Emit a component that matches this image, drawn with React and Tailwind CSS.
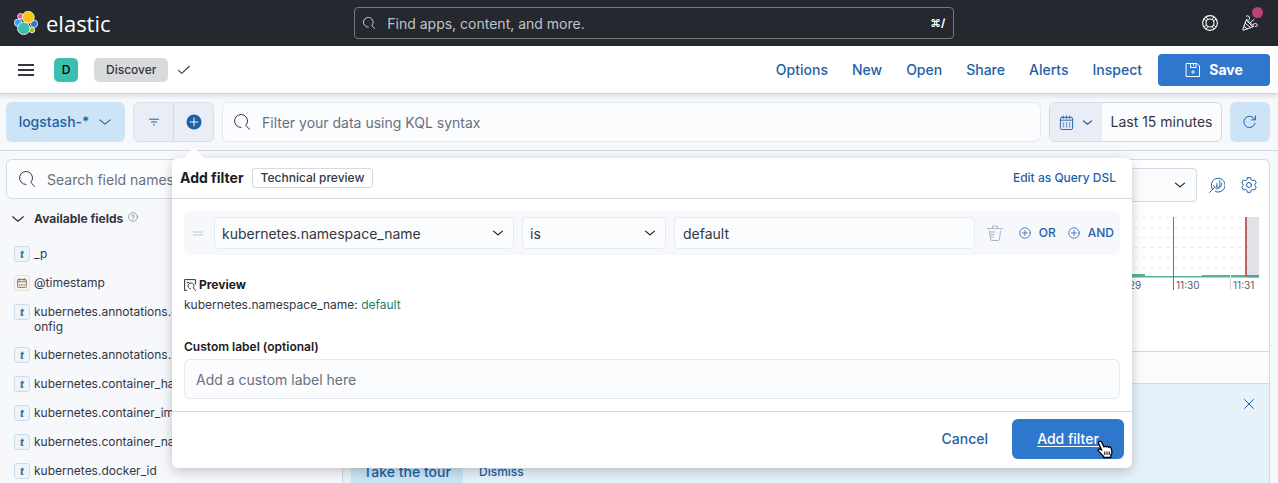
import React from 'react';

const fields = [
  { type: 'text', name: '_p' },
  { type: 'date', name: '@timestamp' },
  { type: 'text', name: 'kubernetes.annotations.c', rest: 'onfig' },
  { type: 'text', name: 'kubernetes.annotations.k' },
  { type: 'text', name: 'kubernetes.container_hash' },
  { type: 'text', name: 'kubernetes.container_image' },
  { type: 'text', name: 'kubernetes.container_name' },
  { type: 'text', name: 'kubernetes.docker_id' },
];

const navItems = ['Options', 'New', 'Open', 'Share', 'Alerts', 'Inspect'];

function Icon({ children, className = 'size-4', ...rest }) {
  return (
    <svg
      viewBox="0 0 16 16"
      fill="none"
      stroke="currentColor"
      strokeLinecap="round"
      strokeLinejoin="round"
      aria-hidden="true"
      className={`shrink-0 ${className}`}
      {...rest}
    >
      {children}
    </svg>
  );
}

const SearchIcon = ({ className }) => (
  <Icon className={className}>
    <path d="M7 13.5a6.5 6.5 0 1 1 4.8-2.1L15.5 15.4" />
  </Icon>
);

const ChevronDown = ({ className, strokeWidth = 1.2 }) => (
  <Icon className={className} strokeWidth={strokeWidth}>
    <path d="M2 5.5l6 5 6-5" />
  </Icon>
);

const CalendarIcon = ({ className }) => (
  <Icon className={className}>
    <rect x="1.5" y="2.5" width="13" height="13" rx="1.5" />
    <path d="M1.5 5.5h13M4.5 1v2.5M8 1v2.5M11.5 1v2.5" />
    <path d="M4 8.5h1.500M7.300 8.5h1.500M10.600 8.5h1.500M4 10.5h1.500M7.300 10.5h1.500M10.600 10.5h1.500M4 12.5h1.500M7.300 12.5h1.500M10.600 12.5h1.500" strokeLinecap="butt" />
  </Icon>
);

const PlusCircle = ({ className }) => (
  <Icon className={className}>
    <circle cx="8" cy="8" r="7" />
    <path d="M8 4.5v7M4.5 8h7" />
  </Icon>
);

function ElasticLogo() {
  return (
    <svg viewBox="0 0 24 24" className="size-6 shrink-0" aria-hidden="true" stroke="#fff" strokeWidth="0.8">
      <circle cx="6.6" cy="5.3" r="2.9" fill="#f04e98" />
      <circle cx="18" cy="19" r="2.8" fill="#93c90e" />
      <circle cx="4.2" cy="11.7" r="3.8" fill="#36a2ef" />
      <circle cx="20" cy="12.8" r="3.7" fill="#2f78cf" />
      <circle cx="14.2" cy="6.3" r="6" fill="#f9c416" />
      <circle cx="9.7" cy="17.4" r="6.2" fill="#3cbeb1" />
    </svg>
  );
}

function GlobalHeader() {
  return (
    <header className="flex h-[46px] shrink-0 items-center bg-[#25282f] text-white">
      <div className="flex flex-auto items-center gap-2 pr-2 pl-[14px]">
        <ElasticLogo />
        <span className="font-['Open_Sans',sans-serif] text-[22px] leading-6">elastic</span>
      </div>
      <label className="flex h-8 w-[600px] min-w-0 items-center gap-3 rounded border border-[#75787e] px-2">
        <SearchIcon className="size-3" />
        <span className="sr-only">Search Elastic</span>
        <input
          type="search"
          placeholder="Find apps, content, and more."
          className="h-full min-w-0 flex-1 bg-transparent text-sm outline-none placeholder:text-[#c0c3c8]"
        />
        <kbd className="font-['Inter',sans-serif] text-[11px] font-bold">⌘/</kbd>
      </label>
      <div className="flex flex-auto justify-end pr-2">
        <button aria-label="Help" className="flex size-10 items-center justify-center">
          <Icon>
            <circle cx="8" cy="8" r="7.400" strokeWidth="1.100" />
            <circle cx="8" cy="8" r="4" strokeWidth="1.100" />
            <path d="M4.200 2L6 4.600M2 4.200L4.600 6M11.800 2L10 4.600M14 4.200L11.400 6M4.200 14L6 11.400M2 11.800L4.600 10M11.800 14L10 11.400M14 11.800L11.400 10" strokeWidth="0.900" />
          </Icon>
        </button>
        <button aria-label="What's new" className="relative flex size-10 items-center justify-center">
          <Icon>
            <path d="M4.500 4.500L.8 14.400c-.2.600.3 1 .8.800L11.500 11.500z" />
            <path d="M3.200 8.200l5.200 4.400M4.500 5.500l6 6M2 11.500l3.200 2.400" />
            <path d="M4.500 1c2-.6 3.200.5 3 2.200-.1 1-.5 1.500-.5 1.500M8.500 7.500l3.500-3M11 9.500c1.500-1.500 4-1.300 4.200.3.200 1.500-1 2-1.700 1.700" />
          </Icon>
          <span className="absolute top-1 right-[7px] size-[11px] rounded-full bg-[#c0407b]" />
        </button>
      </div>
    </header>
  );
}

function AppBar() {
  return (
    <div className="relative z-10 flex h-12 shrink-0 items-center border-b border-[#d0d3d9] bg-white pr-2 pl-[18px] shadow-[0_2px_5px_rgba(0,0,0,0.12)]">
      <button aria-label="Menu" className="flex flex-col gap-[3px]">
        <span className="h-[2px] w-4 bg-[#343741]" />
        <span className="h-[2px] w-4 bg-[#343741]" />
        <span className="h-[2px] w-4 bg-[#343741]" />
      </button>
      <button aria-label="Default space" className="ml-5 flex size-6 items-center justify-center rounded-[5px] bg-[#3cbeb1] text-xs font-medium text-black">
        D
      </button>
      <a href="#discover" className="ml-4 flex h-6 items-center rounded-[5px] bg-[#d9dadc] px-3 text-xs font-medium text-[#343741]">
        Discover
      </a>
      <Icon className="ml-[10px] size-3 text-[#343741]" strokeWidth="1.4">
        <path d="M.8 8.500l4.200 4L15.200 3" />
      </Icon>
      <nav className="ml-auto flex items-center gap-6 text-sm font-medium text-[#1f5fa6]">
        {navItems.map((item) => (
          <a key={item} href={`#${item.toLowerCase()}`}>
            {item}
          </a>
        ))}
      </nav>
      <button className="ml-4 flex h-8 w-28 items-center justify-center gap-2 rounded bg-[#2f76cd] text-sm font-bold text-white">
        <Icon>
          <path d="M1.500 1.500h10.500l2.500 2.500v10.500h-13zM5.500 1.500v4h5.500v-4M8.500 2.500v1" strokeLinejoin="miter" />
          <circle cx="8" cy="10" r="1.700" fill="currentColor" fillOpacity="0.700" stroke="none" />
        </Icon>
        Save
      </button>
    </div>
  );
}

function QueryBar() {
  return (
    <div className="relative flex shrink-0 items-center gap-2 border-b border-[#d3dae6] py-2 pr-2 pl-[6px]">
      <button className="flex h-10 w-[119px] items-center justify-center gap-[9px] rounded-md bg-[#cce4f5] text-sm font-medium text-[#1f5fa6]">
        logstash-*
        <ChevronDown className="size-[14px]" />
      </button>
      <div className="flex h-10 w-[81px] overflow-hidden rounded-md border border-[#d8deea] bg-[#e9edf5] text-[#1f5fa6]">
        <button aria-label="Filter options" className="flex flex-1 items-center justify-center border-r border-[#d3dae6]">
          <Icon className="size-[10px]" strokeWidth="1.600">
            <path d="M.8 3.500h14.400M4 8h8M7.200 12.500h1.600" />
          </Icon>
        </button>
        <button aria-label="Add filter" className="flex flex-1 items-center justify-center">
          <svg viewBox="0 0 16 16" className="size-4" aria-hidden="true">
            <circle cx="8" cy="8" r="7.500" fill="#1f5fa6" />
            <path d="M8 4v8M4 8h8" stroke="#fff" strokeLinecap="round" />
          </svg>
        </button>
      </div>
      <label className="flex h-10 min-w-0 flex-1 items-center gap-3 rounded-md border border-[#e3e8f1] bg-[#fbfcfd] px-[11px] text-[#343741]">
        <SearchIcon className="size-4" />
        <span className="sr-only">Query</span>
        <input
          placeholder="Filter your data using KQL syntax"
          className="h-full min-w-0 flex-1 bg-transparent pt-px text-sm outline-none placeholder:text-[#69707d]"
        />
      </label>
      <div className="flex h-10 overflow-hidden rounded-md border border-[#d3dae6] bg-[#fbfcfd]">
        <button aria-label="Quick time ranges" className="flex w-[52px] items-center justify-center gap-2 bg-[#e9edf5] text-[#1f5fa6]">
          <CalendarIcon className="size-[15px]" />
          <ChevronDown className="size-[11px]" strokeWidth={1.6} />
        </button>
        <button className="w-[119px] text-sm whitespace-nowrap text-[#343741]">Last 15 minutes</button>
      </div>
      <button aria-label="Refresh" className="flex size-10 items-center justify-center rounded-md bg-[#cce4f5] text-[#1f5fa6]">
        <Icon className="size-[14px]" strokeWidth="1.100">
          <path d="M13.800 9.500A6.500 6.500 0 1 1 12.500 3.800L14 5.500M14.200 1v4.500H9.800" />
        </Icon>
      </button>
      <AddFilterPopover />
    </div>
  );
}

function FilterSelect({ label, value, className }) {
  return (
    <div className={`relative ${className}`}>
      <select
        aria-label={label}
        defaultValue={value}
        className="h-8 w-full appearance-none rounded border border-[#e6eaf2] bg-[#fbfcfd] pt-px pr-8 pl-[7px] text-sm text-[#343741]"
      >
        <option>{value}</option>
      </select>
      <ChevronDown className="pointer-events-none absolute top-[10px] right-[10px] size-3 text-[#1a1c21]" strokeWidth={1.6} />
    </div>
  );
}

function AddFilterPopover() {
  return (
    <div role="dialog" aria-label="Add filter" className="absolute top-16 left-[172px] z-20 w-[960px] rounded-md bg-white text-[#343741] shadow-[0_3px_12px_rgba(0,0,0,0.22)]">
      <span className="absolute -top-[7px] left-[14px] size-4 rotate-45 bg-white" />
      <div className="relative flex h-[41px] items-center border-b border-[#d3dae6] pr-4 pb-px pl-2">
        <h2 className="text-sm font-bold text-[#1a1c21]">Add filter</h2>
        <span className="ml-2 flex h-5 items-center rounded-[3px] border border-[#d3dae6] px-2 text-xs font-medium">Technical preview</span>
        <button className="ml-auto text-xs font-medium text-[#1f5fa6]">Edit as Query DSL</button>
      </div>
      <div className="px-3 py-3">
        <div className="flex h-11 items-center rounded-md bg-[#f7f8fc] pr-[6px] pl-[9px]">
          <span className="flex w-[10px] flex-col gap-px" aria-hidden="true">
            <span className="h-[2px] bg-[#d8deea]" />
            <span className="h-[2px] bg-[#d8deea]" />
          </span>
          <FilterSelect label="Field" value="kubernetes.namespace_name" className="ml-[11px] w-[300px]" />
          <FilterSelect label="Operator" value="is" className="ml-2 w-36" />
          <input
            aria-label="Value"
            defaultValue="default"
            className="ml-2 h-8 min-w-0 flex-1 rounded border border-[#e6eaf2] bg-[#fbfcfd] px-2 text-sm outline-none"
          />
          <button aria-label="Delete filter" className="ml-3 text-[#abb4c4]">
            <Icon>
              <path d="M.5 3.500h15M5.500 3.500v-2.500h5v2.500M2.500 6l1 8c.1.900.5 1.500 1.200 1.500h6.600c.700 0 1.100-.6 1.200-1.500l1-8M3 7h5M3.200 9.500h3.800M3.500 12h2.500" />
            </Icon>
          </button>
          <button className="ml-4 flex items-center gap-2 text-xs font-medium text-[#1f5fa6]">
            <PlusCircle className="size-3" />
            OR
          </button>
          <button className="ml-3 flex items-center gap-2 text-xs font-medium text-[#1f5fa6]">
            <PlusCircle className="size-3" />
            AND
          </button>
        </div>
        <div className="mt-5 flex h-5 items-center gap-[3px] text-xs font-bold text-[#1a1c21]">
          <Icon className="size-[12px]" strokeWidth="1.200">
            <path d="M3.500 15.200H.8V.8h14.400v6M4 4.500h2" />
            <path d="M8.500 13.200a4 4 0 1 1 3.900-1.400l3.100 3.600" />
          </Icon>
          Preview
        </div>
        <p className="text-xs leading-5">
          kubernetes.namespace_name: <span className="text-[#1a7f72]">default</span>
        </p>
        <label htmlFor="custom-label" className="mt-6 block text-xs leading-4 font-semibold text-[#1a1c21]">
          Custom label (optional)
        </label>
        <input
          id="custom-label"
          placeholder="Add a custom label here"
          className="mt-1 block h-10 w-full rounded-md border border-[#e3e8f1] bg-[#fbfcfd] px-[11px] text-sm outline-none placeholder:text-[#69707d]"
        />
      </div>
      <div className="flex items-center justify-end gap-6 border-t border-[#d3dae6] px-2 pt-[7px] pb-[9px]">
        <button className="text-sm font-medium text-[#1f5fa6]">Cancel</button>
        <button className="relative h-10 w-28 rounded-md bg-[#2f76cd] text-sm font-medium text-white underline underline-offset-2">
          Add filter
          <svg viewBox="0 0 17 19" className="absolute top-[21px] right-[10px] h-[19px] w-[17px]" aria-hidden="true">
            <path
              d="M2.200 1.500c1-.7 2-.2 2.500.8l2.200 4.600c.4-.8 1.900-.9 2.300.1.500-.8 2-.7 2.400.3.700-.6 2.100-.2 2.400.8.600 1.700 1.300 3.300.8 5.200l-1 2v2.200H6.800l-.5-1.500-4.700-4.900c-1-1.200.4-2.600 1.700-1.900l1.400 1L1.700 3.600c-.4-.8-.2-1.600.5-2.100z"
              fill="#fff"
              stroke="#000"
              strokeWidth="1.300"
              strokeLinejoin="round"
            />
            <path d="M7.800 11.500v3.500M10 11.500v3.500M12.200 11.500v3.500" stroke="#000" />
          </svg>
        </button>
      </div>
    </div>
  );
}

function FieldToken({ type }) {
  if (type === 'date') {
    return (
      <span className="flex size-4 shrink-0 items-center justify-center rounded-[3px] border border-[#e8e2d6] bg-[#f8f5ef] text-[#7b6b50]">
        <Icon className="size-[10px]" strokeWidth="1.400">
          <rect x="1" y="2.500" width="14" height="12.500" rx="1" />
          <path d="M1 6h14M4.500 .8v3M11.500 .8v3M4.500 10v2M8 10v2M11.500 10v2" />
        </Icon>
      </span>
    );
  }
  return (
    <span className="flex size-4 shrink-0 items-center justify-center rounded-[3px] border border-[#c9dcec] bg-[#edf4fa] text-[10px] leading-none font-extrabold text-[#41708f] italic">
      t
    </span>
  );
}

function Sidebar() {
  return (
    <aside className="w-[342px] shrink-0 pr-3 pl-[6px] text-[#343741]">
      <label className="flex h-10 items-center gap-3 rounded-md border border-[#d3dae6] bg-[#fbfcfd] px-3">
        <SearchIcon className="size-4" />
        <span className="sr-only">Search field names</span>
        <input
          placeholder="Search field names"
          className="h-full min-w-0 flex-1 bg-transparent pt-px text-sm outline-none placeholder:text-[#69707d]"
        />
      </label>
      <button className="mt-3 ml-[5px] flex h-4 items-center text-xs font-bold">
        <ChevronDown className="size-[14px]" strokeWidth={1.5} />
        <span className="ml-[9px]">Available fields</span>
        <Icon className="mb-1 ml-[5px] size-[10px] text-[#69707d]">
          <circle cx="8" cy="8" r="7" />
          <path d="M6 6.500a2 2 0 1 1 2 2v1.300M8 12v.2" />
        </Icon>
      </button>
      <ul className="mt-[13px] pl-2">
        {fields.map((field) => (
          <li key={field.name} className="flex items-start gap-1 pt-[6px] pb-[7px] text-xs leading-[15px]">
            <FieldToken type={field.type} />
            <span>
              {field.name}
              {field.rest && (
                <>
                  <br />
                  {field.rest}
                </>
              )}
            </span>
          </li>
        ))}
      </ul>
    </aside>
  );
}

function Histogram() {
  return (
    <svg viewBox="0 0 160 76" className="h-[76px] w-[160px]" role="img" aria-label="Documents over time">
      {[0, 10, 20, 30, 40, 50].map((y) => (
        <path key={y} d={`M2 ${y + 0.5}H149`} stroke="#e9ecf3" strokeDasharray="4 4" />
      ))}
      <path d="M0 60.500H159" stroke="#a9d8ca" />
      <rect x="0" y="57" width="45" height="3" fill="#54b399" />
      <rect x="45" y="59" width="57" height="1" fill="#54b399" />
      <rect x="102" y="58" width="28" height="2" fill="#54b399" />
      <rect x="131" y="58" width="28" height="2" fill="#54b399" />
      <rect x="147" y="0" width="12" height="61" fill="#5b6070" fillOpacity="0.180" />
      <rect x="145" y="0" width="2" height="60" fill="#c4605d" />
      <path d="M73.500 0V73" stroke="#74777d" />
      <path d="M130.500 61V73" stroke="#d3d6dc" />
      <g fill="#5a606b" fontFamily="Inter, sans-serif" fontSize="10">
        <text x="18" y="72">11:29</text>
        <text x="76" y="72">11:30</text>
        <text x="133" y="72">11:31</text>
      </g>
    </svg>
  );
}

function Results() {
  return (
    <main className="mr-2 flex min-w-0 flex-1 flex-col rounded-tr-md border-t border-r border-l border-[#d3dae6] bg-white">
      <div className="flex h-48 shrink-0 flex-col border-b border-[#d3dae6]">
        <div className="flex items-center justify-end gap-3 pt-2 pr-3">
          <button aria-label="Break down by" className="flex h-[34px] w-60 items-center justify-end rounded border border-[#d3dae6] bg-[#fbfcfd] pr-[10px] text-[#1a1c21]">
            <ChevronDown className="size-3" strokeWidth={1.6} />
          </button>
          <button aria-label="Edit visualization" className="flex text-[#1f5fa6]">
            <Icon>
              <path d="M3.800 12.600A6.900 6.900 0 1 1 6.500 14.600M.5 15.500l4.500-4.500" />
              <path d="M4.800 8.500v.5a1.500 1.500 0 0 0 3 0V6.500M7.800 9a1.500 1.500 0 0 0 3 0V3.500" strokeWidth="0.900" />
              <path d="M12.700 6C13 9.500 11 11.800 7 11.800" strokeWidth="0.900" />
            </Icon>
          </button>
          <button aria-label="Chart options" className="ml-1 flex text-[#1f5fa6]">
            <Icon>
              <path d="M6.400 .7h3.200l.5 2 1.500.9 2-.6 1.700 2.800L13.900 7.200v1.600l1.400 1.400-1.700 2.800-2-.6-1.500.9-.5 2H6.400l-.5-2-1.500-.9-2 .6L.7 10.200l1.400-1.400V7.200L.7 5.800 2.400 3l2 .6 1.500-.9z" />
              <circle cx="8" cy="8" r="2.500" />
            </Icon>
          </button>
        </div>
        <div className="flex justify-end pt-[15px] pr-[9px]">
          <Histogram />
        </div>
      </div>
      <div className="h-8 shrink-0 border-b border-[#d3dae6] bg-[#fafbfd]" />
      <section className="flex min-h-0 flex-1 flex-col bg-[#e6f1fa] px-2 pt-3">
        <button aria-label="Close" className="mr-1 self-end text-[#1f5fa6]">
          <Icon className="size-4">
            <path d="M3.500 3.500l9 9M12.500 3.500l-9 9" />
          </Icon>
        </button>
        <div className="mt-11 flex items-center gap-4 text-[#1f5fa6]">
          <button className="h-8 w-28 shrink-0 rounded bg-[#cce4f5] text-sm font-medium">Take the tour</button>
          <button className="text-xs font-medium">Dismiss</button>
        </div>
      </section>
    </main>
  );
}

export default function App() {
  return (
    <div className="flex h-screen flex-col overflow-hidden bg-[#f7f8fc] font-['Inter',sans-serif]">
      <GlobalHeader />
      <AppBar />
      <QueryBar />
      <div className="flex min-h-0 flex-1 pt-2">
        <Sidebar />
        <Results />
      </div>
    </div>
  );
}
